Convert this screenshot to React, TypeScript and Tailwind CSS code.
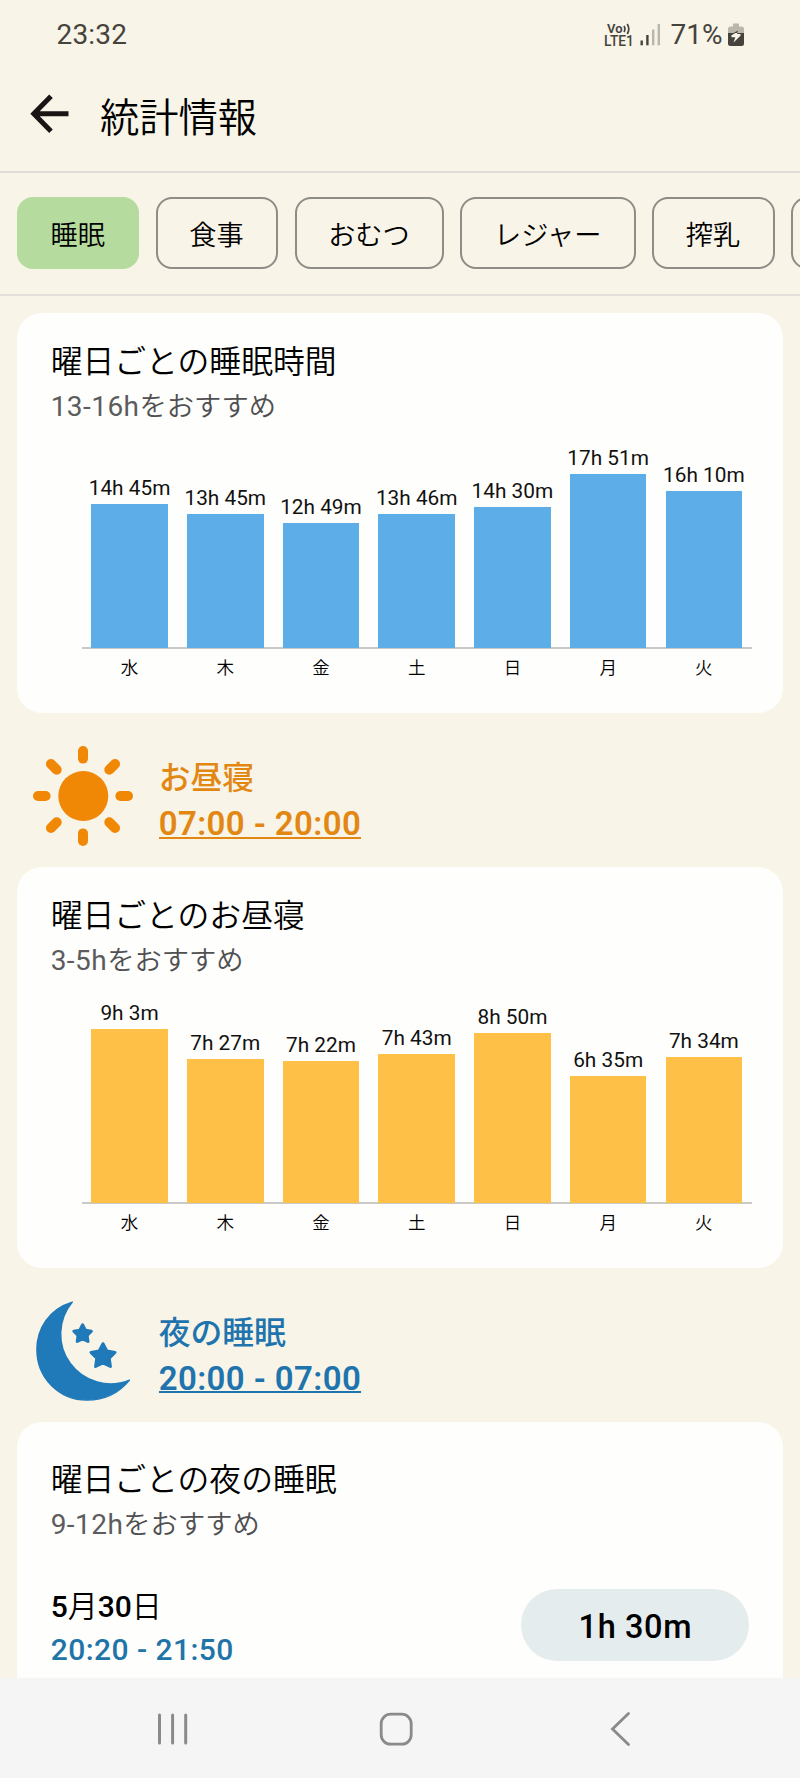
import React from "react";

type Day = { day: string; h: number; m: number };

const DAYS = ["水", "木", "金", "土", "日", "月", "火"];

const toDays = (values: [number, number][]): Day[] =>
  values.map(([h, m], i) => ({ day: DAYS[i], h, m }));

const TOTAL_SLEEP = toDays([[14, 45], [13, 45], [12, 49], [13, 46], [14, 30], [17, 51], [16, 10]]);
const NAPS = toDays([[9, 3], [7, 27], [7, 22], [7, 43], [8, 50], [6, 35], [7, 34]]);

const TABS = ["睡眠", "食事", "おむつ", "レジャー", "搾乳"];

function StatusBar() {
  return (
    <div className="flex h-[68px] shrink-0 items-center pl-[56.500px] pr-[56px] text-[#45433c]">
      <span className="pt-[2px] text-[28px] leading-[68px] tracking-[0.2px]">23:32</span>
      <div className="ml-auto flex items-center pt-[2px]">
        <div className="flex w-[29px] flex-col items-center font-medium">
          <span className="flex items-center text-[13px] font-semibold leading-[12px]">
            Vo
            <svg className="ml-[0.500px]" width="8" height="12" viewBox="0 0 8 12" fill="none" stroke="currentColor" strokeWidth="1.7">
              <path d="M1 3Q2.800 6 1 9M4.200 1Q7.400 6 4.200 11" />
            </svg>
          </span>
          <span className="text-[13.800px] leading-[13px]">LTE1</span>
        </div>
        <svg className="ml-[6px]" width="21" height="24" viewBox="0 0 21 24">
          <rect x="0.5" y="17.5" width="2.4" height="4.8" fill="#45433c" />
          <rect x="6.2" y="12" width="2.4" height="10.3" fill="#45433c" />
          <rect x="12" y="6.5" width="2.4" height="15.8" fill="#b9b6ac" />
          <rect x="17.6" y="1" width="2.4" height="21.3" fill="#b9b6ac" />
        </svg>
        <span className="ml-[10px] text-[28px] leading-[68px]">71%</span>
        <svg className="ml-[5.500px]" width="16" height="24" viewBox="0 0 16 24">
          <path d="M5 0.5h6v3h2.500a2.500 2.500 0 0 1 2.500 2.500v4H0V6a2.500 2.500 0 0 1 2.500-2.500H5z" fill="#b9b6ac" />
          <path d="M0 10h16v10.500a2.500 2.500 0 0 1-2.500 2.500h-11a2.500 2.500 0 0 1-2.500-2.500z" fill="#45433c" />
          <path d="M10 8.500L3.500 12.200V14.200H7.300L5.500 19.500L12.500 12.700V11H9z" fill="#f8f4e8" />
          <path d="M10 7.500L5.500 10H9.300z" fill="#45433c" />
        </svg>
      </div>
    </div>
  );
}

function Header() {
  return (
    <header className="flex h-[105px] shrink-0 items-start border-b-2 border-[#dfdcd8] pl-[30.400px]">
      <svg className="mt-[26px]" width="39" height="40" viewBox="0 0 39 40" fill="none" stroke="#1a1414" strokeWidth="5">
        <path d="M21 2.200L3.800 19.700L21 37.200M3.800 19.700H38.500" />
      </svg>
      <h1 className="ml-[30.600px] mt-[21px] text-[39.300px] font-[350] leading-[60px] text-black">統計情報</h1>
    </header>
  );
}

function Tabs() {
  return (
    <nav className="flex h-[123px] shrink-0 gap-[16.400px] overflow-hidden border-b-2 border-[#e2dfda] pl-[17px] pt-[24px]">
      {TABS.map((t, i) => (
        <button
          key={t}
          className={
            "flex h-[72px] shrink-0 rounded-[16px] border-2 pl-[31.600px] pr-[32.400px] pt-[3px] text-[27.200px] font-[350] leading-[68px] text-black " +
            (i === 0 ? "border-[#b5db9f] bg-[#b5db9f]" : "border-[#8e8c86]")
          }
        >
          {t}
        </button>
      ))}
      <button className="h-[72px] w-[122px] shrink-0 rounded-[16px] border-2 border-[#8e8c86]" />
    </nav>
  );
}

function CardHeading({ title, hint }: { title: string; hint: string }) {
  return (
    <div className="pl-[33.700px]">
      <h2 className="text-[31.800px] font-[350] leading-[40px] text-black">{title}</h2>
      <p className="text-[27.300px] font-[350] leading-[50px] text-[#505052]">
        <span className="text-[28px] font-normal tracking-[0.450px] text-[#5c5c5e]">{hint.split("を")[0]}</span>
        を{hint.split("を")[1]}
      </p>
    </div>
  );
}

function ChartCard({ title, hint, data, color }: { title: string; hint: string; data: Day[]; color: string }) {
  const max = Math.max(...data.map((d) => d.h * 60 + d.m));
  return (
    <section className="mx-[17px] flex h-[400.500px] shrink-0 flex-col rounded-[25px] bg-[#fefefc] pt-[29px]">
      <CardHeading title={title} hint={hint} />
      <div className="ml-[64.700px] flex h-[217.400px] w-[670px] items-end border-b-2 border-[#c9c9c9]">
        {data.map((d) => (
          <div key={d.day} className="-mb-px flex flex-1 flex-col items-center">
            <span className="whitespace-nowrap text-[20.800px] leading-[31px] text-[#111]">
              {d.h}h {d.m}m
            </span>
            <div className={"w-4/5 " + color} style={{ height: ((d.h * 60 + d.m) / max) * 174 }} />
          </div>
        ))}
      </div>
      <div className="ml-[64.700px] flex w-[670px]">
        {data.map((d) => (
          <span key={d.day} className="flex-1 text-center text-[17.500px] font-[350] leading-[38px] text-black">
            {d.day}
          </span>
        ))}
      </div>
    </section>
  );
}

function SunIcon() {
  return (
    <svg width="100" height="100" viewBox="-50 -50 100 100">
      <circle cx="0.300" r="25" fill="#f08705" />
      {[0, 90, 180, 270].map((a) => (
        <line key={a} y1="-45" y2="-37.400" stroke="#f08705" strokeWidth="10" strokeLinecap="round" transform={`rotate(${a})`} />
      ))}
      {[45, 135, 225, 315].map((a) => (
        <line key={a} y1="-45.300" y2="-37.200" stroke="#f08705" strokeWidth="10" strokeLinecap="round" transform={`rotate(${a})`} />
      ))}
    </svg>
  );
}

function starPoints(cx: number, cy: number, r: number) {
  return Array.from({ length: 10 }, (_, i) => {
    const a = (Math.PI / 5) * i - Math.PI / 2;
    const q = i % 2 ? r * 0.52 : r;
    return `${cx + q * Math.cos(a)},${cy + q * Math.sin(a)}`;
  }).join(" ");
}

function MoonIcon() {
  return (
    <svg width="100" height="100" viewBox="0 0 100 100" fill="#2079b8" stroke="#2079b8" strokeLinejoin="round">
      <path d="M39.300 1.100C16 8 3.900 28 3.900 48.500C3.900 77 26 99.100 54 99.100C71 99.100 86 92 96.500 79.100A49.800 49.800 0 0 1 39.300 1.100Z" strokeWidth="1.400" />
      <polygon points={starPoints(49.6, 33, 9.2)} strokeWidth="3" />
      <polygon points={starPoints(70, 55.3, 12.6)} strokeWidth="3" />
    </svg>
  );
}

function Period({ icon, name, range, color }: { icon: React.ReactNode; name: string; range: string; color: string }) {
  return (
    <div className={"flex h-[154px] shrink-0 pl-[33.300px] pt-[33.200px] " + color}>
      {icon}
      <div className="ml-[25.400px] mt-[12px]">
        <div className="text-[31.800px] font-medium leading-[40px]">{name}</div>
        <div className="mt-[4px] h-[36.500px] border-b-2 border-current text-[33px] font-semibold leading-[44px] tracking-[0.400px]">
          <span className="block">{range}</span>
        </div>
      </div>
    </div>
  );
}

function NightCard() {
  return (
    <section className="mx-[17px] flex h-[300px] shrink-0 flex-col rounded-t-[25px] bg-[#fefefc] pt-[38px]">
      <CardHeading title="曜日ごとの夜の睡眠" hint="9-12hをおすすめ" />
      <div className="mt-[39px] flex justify-between pl-[33.700px] pr-[33.700px]">
        <div className="font-medium">
          <div className="text-[30px] leading-[36px] text-black">
            5<span className="font-[350]">月</span>30<span className="font-[350]">日</span>
          </div>
          <div className="text-[30px] leading-[50px] tracking-[0.450px] text-[#1f74a8]">20:20 - 21:50</div>
        </div>
        <div className="h-[72px] w-[228px] rounded-full bg-[#e5ecee] text-center text-[32.500px] font-medium leading-[76px] tracking-[0.600px] text-black">
          1h 30m
        </div>
      </div>
    </section>
  );
}

function NavigationBar() {
  return (
    <div className="flex h-[100px] shrink-0 items-center bg-[#f5f5f5] pl-[157px] pt-[2px]">
      <svg width="31" height="34" viewBox="0 0 31 34" stroke="#8a8a8a" strokeWidth="3" strokeLinecap="round">
        <path d="M2.500 3V31M15.600 3V31M28.700 3V31" />
      </svg>
      <svg className="ml-[191px]" width="35" height="35" viewBox="0 0 35 35" fill="none" stroke="#8a8a8a" strokeWidth="2.800">
        <rect x="2.200" y="2.200" width="30" height="30" rx="9.500" />
      </svg>
      <svg className="ml-[195px]" width="22" height="36" viewBox="0 0 22 36" fill="none" stroke="#8a8a8a" strokeWidth="2.800" strokeLinecap="round">
        <path d="M19.500 2.500L3.500 18L19.500 33.500" />
      </svg>
    </div>
  );
}

export default function App() {
  return (
    <div className="flex h-[1778px] w-[800px] flex-col overflow-hidden bg-[#f8f4e8] font-['Roboto','Noto_Sans_CJK_JP',sans-serif]">
      <StatusBar />
      <Header />
      <Tabs />
      <main className="flex min-h-0 flex-1 flex-col overflow-hidden pt-[16.700px]">
        <ChartCard title="曜日ごとの睡眠時間" hint="13-16hをおすすめ" data={TOTAL_SLEEP} color="bg-[#5cade8]" />
        <Period icon={<SunIcon />} name="お昼寝" range="07:00 - 20:00" color="text-[#e28712]" />
        <ChartCard title="曜日ごとのお昼寝" hint="3-5hをおすすめ" data={NAPS} color="bg-[#ffc048]" />
        <Period icon={<MoonIcon />} name="夜の睡眠" range="20:00 - 07:00" color="text-[#1f74ad]" />
        <NightCard />
      </main>
      <NavigationBar />
    </div>
  );
}
